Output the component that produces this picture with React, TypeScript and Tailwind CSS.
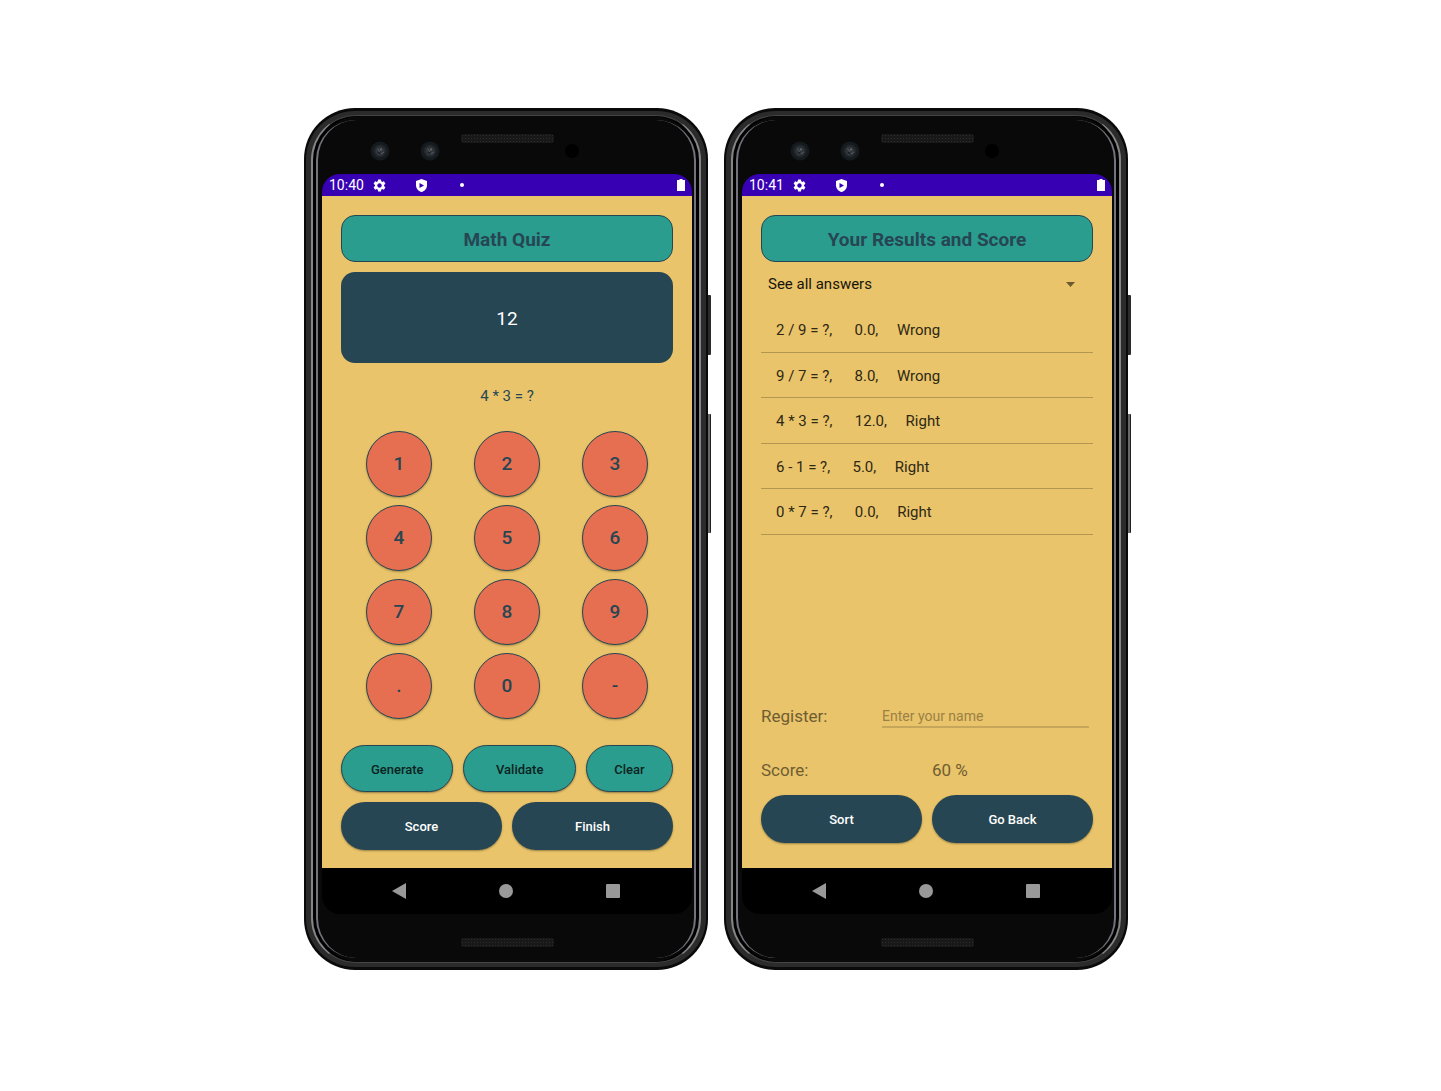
import type { ReactNode } from "react";
import { MdSettings } from "react-icons/md";

const KEYS = ["1", "2", "3", "4", "5", "6", "7", "8", "9", ".", "0", "-"];

const ANSWERS = [
  "2 / 9 = ?,      0.0,     Wrong",
  "9 / 7 = ?,      8.0,     Wrong",
  "4 * 3 = ?,      12.0,     Right",
  "6 - 1 = ?,      5.0,     Right",
  "0 * 7 = ?,      0.0,     Right",
];

function Lens() {
  return (
    <svg width="20" height="20" viewBox="0 0 20 20" aria-hidden="true">
      <circle cx="10" cy="10" r="9.5" fill="#141a1e" />
      <circle cx="10" cy="10" r="6.5" fill="#22272b" />
      <circle cx="10" cy="10" r="4.5" fill="#30353a" />
      <path d="M7.5 7.5l2 3-1 3M11 13l3-2" stroke="#555a66" strokeWidth="1" fill="none" />
      <circle cx="11" cy="8.5" r="1" fill="#6d7078" />
      <circle cx="9" cy="12" r="1" fill="#15181b" />
    </svg>
  );
}

function Speaker() {
  return (
    <span className="block h-[9px] w-[93px] rounded-[3px] bg-[#181818] bg-[radial-gradient(#2c2c2c_1px,transparent_1px)] bg-[size:3px_3px]" />
  );
}

function StatusBar({ time }: { time: string }) {
  return (
    <header className="flex h-[22px] items-center bg-[#3700b3] pr-[7px] pl-[7px] text-white">
      <time className="w-9 text-[14px] leading-[22px]">{time}</time>
      <div className="ml-[7px] flex items-center gap-[29px]">
        <MdSettings className="size-[15px]" aria-hidden="true" />
        <svg width="11" height="13" viewBox="0 0 11 13" aria-hidden="true">
          <path d="M5.5 0L11 2v4.2C11 9.5 8.600 12.200 5.500 13 2.400 12.200 0 9.500 0 6.200V2z" fill="#fff" />
          <path d="M3.500 4v5l4.500-2.500z" fill="#3700b3" />
        </svg>
        <span className="ml-1 size-1 rounded-full bg-white" />
      </div>
      <svg className="ml-auto" width="8" height="12" viewBox="0 0 8 12" aria-hidden="true">
        <path d="M2.500 0h3v1H8v11H0V1h2.500z" fill="#fff" />
      </svg>
    </header>
  );
}

function NavBar() {
  return (
    <nav className="grid h-[46px] grid-cols-3 bg-black pr-[25px] pl-[23px]">
      <button type="button" aria-label="Back" className="flex items-center justify-center">
        <svg width="14" height="16" viewBox="0 0 14 16" aria-hidden="true">
          <path d="M14 0v16L0 8z" fill="#999" />
        </svg>
      </button>
      <button type="button" aria-label="Home" className="flex items-center justify-center">
        <span className="size-[14px] rounded-full bg-[#999]" />
      </button>
      <button type="button" aria-label="Recent apps" className="flex items-center justify-center">
        <span className="size-[14px] rounded-[1px] bg-[#999]" />
      </button>
    </nav>
  );
}

function Phone({ time, children }: { time: string; children: ReactNode }) {
  return (
    <article className="flex max-w-[407px] flex-1">
      <div className="flex flex-1 flex-col rounded-[51px] bg-[#0a0a0a] px-[2px] py-[3px]">
        <div className="flex flex-1 flex-col rounded-[49px] bg-[#2b2b2b] px-[5px] py-1">
          <div className="flex flex-1 flex-col rounded-[45px] border-x-2 border-y border-x-[#858585] border-y-[#444] bg-black px-[3px]">
            <div className="flex flex-1 flex-col rounded-[44px] bg-[#090909] py-1">
              <div className="flex flex-1 flex-col rounded-[40px] border-x-2 border-[#74727c] pr-0.5 pl-1">
                <div className="grid h-[54px] grid-cols-[1fr_93px_1fr] gap-[11px]">
                  <div className="flex items-center gap-[30px] pt-2 pl-12">
                    <Lens />
                    <Lens />
                  </div>
                  <div className="pt-[14px]">
                    <Speaker />
                  </div>
                  <div className="flex items-center pt-2">
                    <span className="size-[14px] rounded-full bg-black" />
                  </div>
                </div>
                <div className="flex flex-1 flex-col overflow-hidden rounded-[18px]">
                  <StatusBar time={time} />
                  {children}
                  <NavBar />
                </div>
                <div className="flex h-11 justify-center pt-6">
                  <Speaker />
                </div>
              </div>
            </div>
          </div>
        </div>
      </div>
      <div className="w-[3px] pt-[187px]" aria-hidden="true">
        <div className="h-15 rounded-r-[1px] bg-[#2c2a2a]" />
        <div className="mt-[59px] h-[119px] rounded-r-[1px] border-r border-[#222] bg-[#6a6868]" />
      </div>
    </article>
  );
}

function Title({ children }: { children: ReactNode }) {
  return (
    <h1 className="flex h-[47px] items-center justify-center rounded-[14px] border border-[#264653] bg-[#2a9d8f] pt-[3px] text-[19px] font-bold text-[#264653]">
      {children}
    </h1>
  );
}

function DarkButton({ children }: { children: ReactNode }) {
  return (
    <button type="button" className="h-12 flex-1 rounded-full bg-[#264653] pt-0.5 text-[13px] font-medium text-white shadow-[0_1px_2px_rgba(0,0,0,0.35)]">
      {children}
    </button>
  );
}

function TealButton({ wide, children }: { wide: boolean; children: ReactNode }) {
  return (
    <button
      type="button"
      className={
        (wide ? "flex-[113]" : "flex-[87]") +
        " h-[47px] rounded-full border border-[#264653] bg-[#2a9d8f] pt-0.5 text-[13px] font-medium text-[#0b2320] shadow-[0_1px_2px_rgba(0,0,0,0.35)]"
      }
    >
      {children}
    </button>
  );
}

function QuizScreen() {
  return (
    <section className="flex flex-1 flex-col bg-[#e9c46a] px-[19px] pt-[19px] pb-[18px]">
      <Title>Math Quiz</Title>
      <output className="mt-[10px] flex h-[91px] items-center justify-center rounded-[14px] bg-[#264653] pt-[3px] text-[19px] text-white">
        12
      </output>
      <p className="pt-[21px] pb-[23px] text-center text-[15px] leading-6 text-[#264653]">4 * 3 = ?</p>
      <div className="grid grid-cols-3 justify-items-center gap-y-2 px-1">
        {KEYS.map((key) => (
          <button
            key={key}
            type="button"
            className="size-[66px] rounded-full border border-[#264653] bg-[#e76f51] text-[19px] font-medium text-[#264653] shadow-[0_1px_2px_rgba(0,0,0,0.3)]"
          >
            {key}
          </button>
        ))}
      </div>
      <div className="mt-auto flex gap-[10px] pt-[26px]">
        <TealButton wide>Generate</TealButton>
        <TealButton wide>Validate</TealButton>
        <TealButton wide={false}>Clear</TealButton>
      </div>
      <div className="mt-[10px] flex gap-[10px]">
        <DarkButton>Score</DarkButton>
        <DarkButton>Finish</DarkButton>
      </div>
    </section>
  );
}

function ResultsScreen() {
  return (
    <section className="flex flex-1 flex-col bg-[#e9c46a] px-[19px] pt-[19px] pb-[25px]">
      <Title>Your Results and Score</Title>
      <div className="relative">
        <select aria-label="Filter answers" className="h-[45px] w-full appearance-none bg-transparent px-[7px] text-[15px] text-[#17140b]">
          <option>See all answers</option>
        </select>
        <svg className="pointer-events-none absolute top-5 right-[18px]" width="9" height="5" viewBox="0 0 9 5" aria-hidden="true">
          <path d="M0 0h9L4.500 5z" fill="#6b5a31" />
        </svg>
      </div>
      <ul className="grid h-[228px] grid-rows-5">
        {ANSWERS.map((answer) => (
          <li key={answer} className="flex items-center border-b border-[#b39751] px-[15px] pt-0.5 text-[15px] whitespace-pre text-[#2f2815]">
            {answer}
          </li>
        ))}
      </ul>
      <div className="mt-auto flex items-center pr-1">
        <label htmlFor="player" className="w-[121px] text-[17px] text-[#6f5d32]">
          Register:
        </label>
        <input
          id="player"
          type="text"
          placeholder="Enter your name"
          className="h-6 min-w-0 flex-1 border-b-2 border-[#c6a65a] bg-transparent pt-0.5 text-[14px] text-[#2f2815] outline-none placeholder:text-[#9a8146]"
        />
      </div>
      <dl className="grid grid-cols-2 gap-[10px] pt-[29px] pb-[13px] text-[17px] leading-6 text-[#6f5d32]">
        <dt>Score:</dt>
        <dd>60 %</dd>
      </dl>
      <div className="flex gap-[10px]">
        <DarkButton>Sort</DarkButton>
        <DarkButton>Go Back</DarkButton>
      </div>
    </section>
  );
}

export default function App() {
  return (
    <main className="flex min-h-screen items-start bg-white pt-27 pr-1.5 font-['Roboto',sans-serif]">
      <div className="mx-auto flex w-full max-w-[827px] items-stretch gap-[13px]">
        <Phone time="10:40">
          <QuizScreen />
        </Phone>
        <Phone time="10:41">
          <ResultsScreen />
        </Phone>
      </div>
    </main>
  );
}
